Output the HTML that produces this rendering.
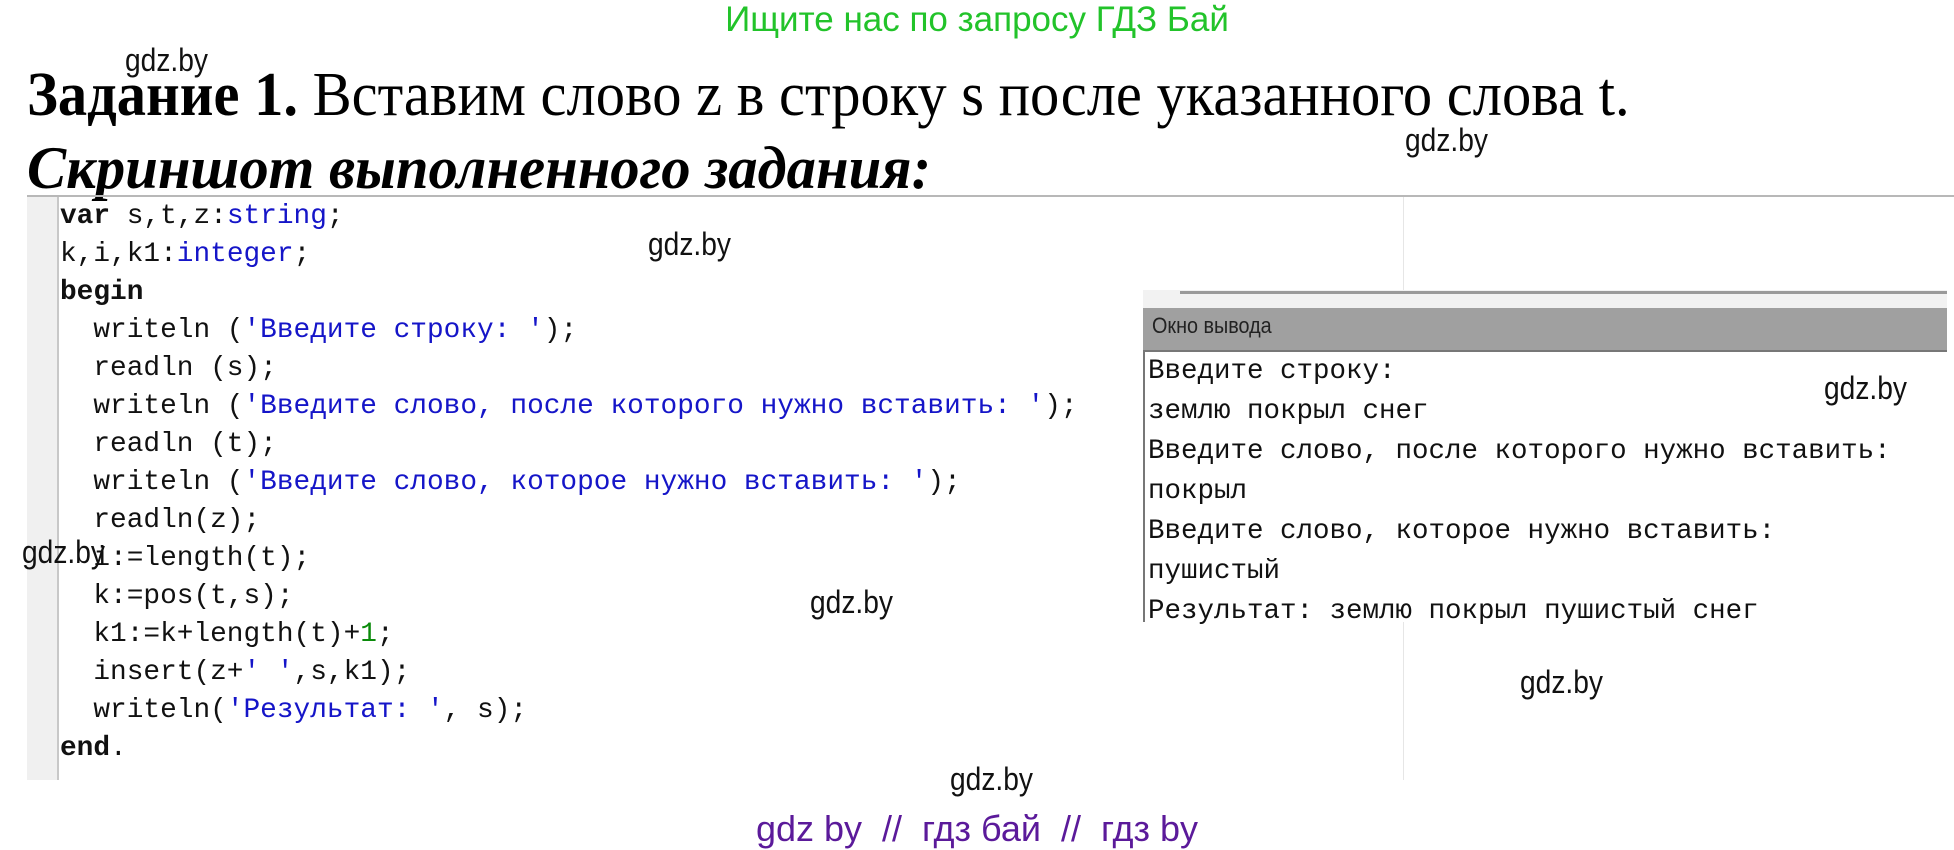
<!DOCTYPE html>
<html><head><meta charset="utf-8"><style>
body{margin:0;width:1954px;height:850px;background:#fff;position:relative;overflow:hidden;font-family:"Liberation Sans",sans-serif}
.a{position:absolute;white-space:pre}
.wm{font-family:"Liberation Sans",sans-serif;font-size:32px;color:#111;transform:scaleX(0.88);transform-origin:left top}
.code{font-family:"Liberation Mono",monospace;font-size:27.8px;color:#111}
.b{color:#1515c8}.k{font-weight:bold}.g{color:#0a8a0a}
.out{font-family:"Liberation Mono",monospace;font-size:27.5px;color:#111}
</style></head><body>
<div class="a" style="left:0;width:1954px;text-align:center;top:0px;font-size:35px;color:#22c32a">Ищите нас по запросу ГДЗ Бай</div>
<div class="a wm" style="left:125px;top:42px">gdz.by</div>
<div class="a" style="left:27px;top:60px;font-family:'Liberation Serif',serif;font-size:62px;transform:scaleX(0.944);transform-origin:left top"><b>Задание 1.</b> Вставим слово z в строку s после указанного слова t.</div>
<div class="a wm" style="left:1405px;top:122px">gdz.by</div>
<div class="a" style="left:27px;top:134px;font-family:'Liberation Serif',serif;font-size:60px;font-weight:bold;font-style:italic;transform:scaleX(0.978);transform-origin:left top">Скриншот выполненного задания:</div>
<div class="a" style="left:27px;top:195px;width:1927px;height:2px;background:#b8b8b8"></div>
<div class="a" style="left:27px;top:197px;width:30px;height:583px;background:#f0f0f0"></div>
<div class="a" style="left:57px;top:197px;width:2px;height:583px;background:#c8c8c8"></div>
<div class="a" style="left:1403px;top:197px;width:1px;height:583px;background:#e6e6e6"></div>
<div class="a code" style="left:60px;top:198px;line-height:38px"><span class="k">var</span> s,t,z:<span class="b">string</span>;
k,i,k1:<span class="b">integer</span>;
<span class="k">begin</span>
  writeln (<span class="b">'Введите строку: '</span>);
  readln (s);
  writeln (<span class="b">'Введите слово, после которого нужно вставить: '</span>);
  readln (t);
  writeln (<span class="b">'Введите слово, которое нужно вставить: '</span>);
  readln(z);
  i:=length(t);
  k:=pos(t,s);
  k1:=k+length(t)+<span class="g">1</span>;
  insert(z+<span class="b">' '</span>,s,k1);
  writeln(<span class="b">'Результат: '</span>, s);
<span class="k">end</span>.</div>
<div class="a" style="left:1143px;top:290px;width:804px;height:60px;background:#f2f2f2"></div>
<div class="a" style="left:1180px;top:291px;width:767px;height:3px;background:#9a9a9a"></div>
<div class="a" style="left:1143px;top:308px;width:804px;height:42px;background:#a0a0a0;border-bottom:2px solid #777"></div>
<div class="a" style="left:1152px;top:313px;font-size:22px;color:#222;transform:scaleX(0.9);transform-origin:left top">Окно вывода</div>
<div class="a" style="left:1143px;top:352px;width:804px;height:270px;background:#fff;border-left:2px solid #777"></div>
<div class="a out" style="left:1148px;top:352px;line-height:40px">Введите строку:
землю покрыл снег
Введите слово, после которого нужно вставить:
покрыл
Введите слово, которое нужно вставить:
пушистый
Результат: землю покрыл пушистый снег</div>
<div class="a wm" style="left:648px;top:226px">gdz.by</div>
<div class="a wm" style="left:1824px;top:370px">gdz.by</div>
<div class="a wm" style="left:22px;top:534px">gdz.by</div>
<div class="a wm" style="left:810px;top:584px">gdz.by</div>
<div class="a wm" style="left:1520px;top:664px">gdz.by</div>
<div class="a wm" style="left:950px;top:761px">gdz.by</div>
<div class="a" style="left:0;width:1954px;text-align:center;top:808px;font-size:36px;color:#5b1a9a">gdz by  //  гдз бай  //  гдз by</div>
</body></html>
